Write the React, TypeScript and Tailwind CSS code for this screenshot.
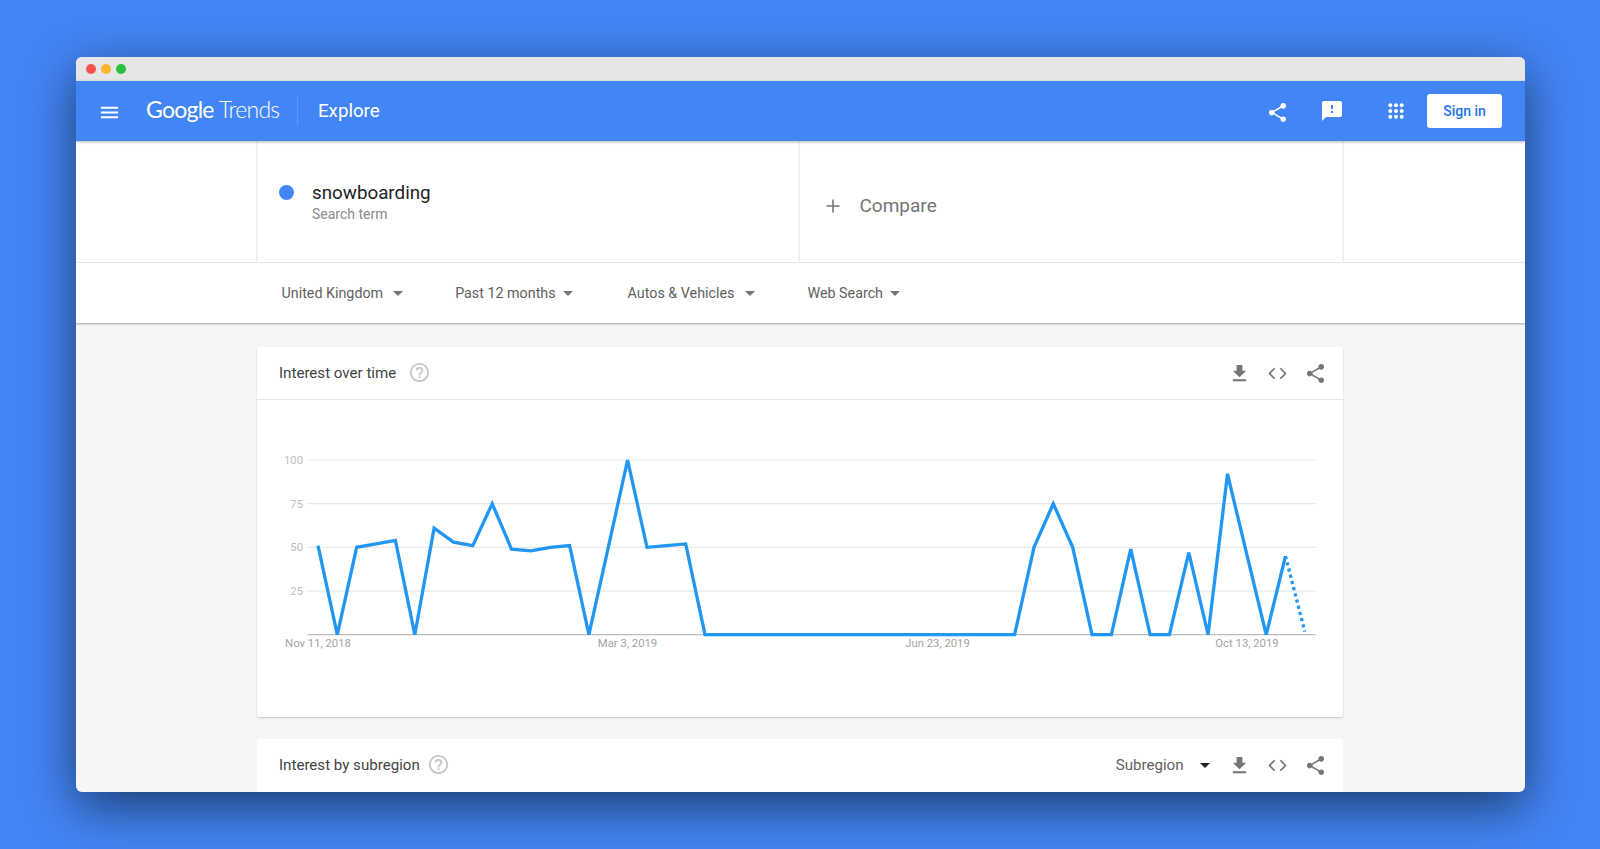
import { ReactNode } from "react";

const SHARE =
  "M18 16.08c-.76 0-1.44.3-1.96.77L8.91 12.7c.05-.23.09-.46.09-.7s-.04-.47-.09-.7l7.05-4.11c.54.5 1.25.81 2.04.81 1.66 0 3-1.34 3-3s-1.34-3-3-3-3 1.34-3 3c0 .24.04.47.09.7L8.04 9.81C7.5 9.31 6.79 9 6 9c-1.66 0-3 1.34-3 3s1.34 3 3 3c.79 0 1.5-.31 2.04-.81l7.12 4.16c-.05.21-.08.43-.08.65 0 1.61 1.31 2.92 2.92 2.92 1.61 0 2.92-1.31 2.92-2.92s-1.31-2.92-2.92-2.92z";
const HELP =
  "M11 18h2v-2h-2v2zm1-16C6.48 2 2 6.48 2 12s4.48 10 10 10 10-4.48 10-10S17.52 2 12 2zm0 18c-4.41 0-8-3.59-8-8s3.59-8 8-8 8 3.59 8 8-3.59 8-8 8zm0-14c-2.21 0-4 1.79-4 4h2c0-1.1.9-2 2-2s2 .9 2 2c0 2-3 1.75-3 5h2c0-2.25 3-2.5 3-5 0-2.21-1.79-4-4-4z";

const Icon = ({ d, className }: { d: string; className: string }) => (
  <svg viewBox="0 0 24 24" fill="currentColor" className={className}>
    <path d={d} />
  </svg>
);

const Caret = ({ className }: { className: string }) => (
  <svg viewBox="0 0 10 5" fill="currentColor" className={className}>
    <path d="M0 0h10L5 5z" />
  </svg>
);

const CardActions = () => (
  <div className="flex items-center text-[#757575]">
    <Icon d="M19 9h-4V3H9v6H5l7 7 7-7zM5 18v2h14v-2H5z" className="w-[23px] h-[23px]" />
    <svg viewBox="0 0 24 24" fill="none" stroke="currentColor" strokeWidth="1.8" className="w-[23px] h-[23px] ml-[15px]">
      <path d="M9 6.5 3.7 12 9 17.5M15 6.5l5.3 5.5-5.3 5.5" />
    </svg>
    <Icon d={SHARE} className="w-[23px] h-[23px] ml-[15px]" />
  </div>
);

const CardHeader = ({ title, help, children }: { title: string; help: string; children: ReactNode }) => (
  <div className="h-[52px] flex items-center pl-[22.5px] pr-[16px] shrink-0">
    <span className="text-[15.1px] text-[#444444]">{title}</span>
    <Icon d={HELP} className={`w-[23px] h-[23px] -mt-[1px] text-[#c8c8c8] ${help}`} />
    <div className="ml-auto flex items-center">{children}</div>
  </div>
);

// values read off the chart, one per week
const values = [
  51, 0, 50, 52, 54, 0, 61, 53, 51, 75, 49, 48, 50, 51, 0, 50, 100, 50, 51, 52, 0, 0, 0, 0, 0, 0, 0, 0, 0, 0, 0, 0, 0, 0,
  0, 0, 0, 50, 75, 50, 0, 0, 49, 0, 0, 47, 0, 92, 46, 0, 45,
];
const px = (i: number) => 61 + i * 19.35;
const py = (v: number) => 234.7 - v * 1.747;
const linePoints = values.map((v, i) => `${px(i).toFixed(1)},${py(v).toFixed(1)}`).join(" ");

const Chart = () => (
  <svg viewBox="0 0 1086 317" className="w-[1086px] h-[317px] font-[Roboto,sans-serif]">
    {[100, 75, 50, 25].map((v) => (
      <g key={v}>
        <line x1="50.5" x2="1058.5" y1={py(v)} y2={py(v)} stroke="#e8e8e8" strokeWidth="1.2" />
        <text x="46" y={py(v) + 4} textAnchor="end" fontSize="11.3" fill="#bdbdbd">
          {v}
        </text>
      </g>
    ))}
    <line x1="50.5" x2="1058.5" y1="234.7" y2="234.7" stroke="#bdbdbd" strokeWidth="1.2" />
    <polyline points={linePoints} fill="none" stroke="#2196f3" strokeWidth="3.3" strokeLinejoin="miter" />
    <line x1={px(50)} y1={py(45)} x2={px(51)} y2={py(0) - 3} stroke="#2196f3" strokeWidth="3.3" strokeDasharray="3.2 3.2" />
    <text x="61" y="247" textAnchor="middle" fontSize="11.3" fill="#a3a3a3">Nov 11, 2018</text>
    <text x="370.5" y="247" textAnchor="middle" fontSize="11.3" fill="#a3a3a3">Mar 3, 2019</text>
    <text x="680.5" y="247" textAnchor="middle" fontSize="11.3" fill="#a3a3a3">Jun 23, 2019</text>
    <text x="990" y="247" textAnchor="middle" fontSize="11.3" fill="#a3a3a3">Oct 13, 2019</text>
  </svg>
);

export default function App() {
  return (
    <div className="h-[849px] w-full overflow-hidden bg-[#4285f4] pt-[57px] pl-[75.5px] font-[Roboto,sans-serif]">
      <div className="w-[1449px] h-[735px] rounded-[6px] overflow-hidden bg-[#f6f6f6] flex flex-col shadow-[0_15px_50px_rgba(0,0,0,0.55)]">
        {/* window chrome */}
        <div className="h-[24px] shrink-0 bg-[#e6e6e6] flex items-center gap-[5.3px] pl-[10px]">
          <span className="w-[10px] h-[10px] rounded-full bg-[#f4524f]" />
          <span className="w-[10px] h-[10px] rounded-full bg-[#fbb42b]" />
          <span className="w-[10px] h-[10px] rounded-full bg-[#27c13f]" />
        </div>

        {/* top bar */}
        <header className="relative z-10 h-[60px] shrink-0 bg-[#4285f4] flex items-center text-white shadow-[0_1px_3px_rgba(0,0,0,0.3)]">
          <Icon d="M3 18h18v-2H3v2zm0-5h18v-2H3v2zm0-7v2h18V6H3z" className="w-[23px] h-[23px] ml-[22.5px] mt-[2px]" />
          <div className="ml-[25px] w-[133px] flex items-baseline whitespace-nowrap text-[23px] tracking-[-0.75px] mb-[4px]">
            <span className="font-[Lato,sans-serif]">Google</span>
            <span className="ml-[5px] font-light font-[Lato,sans-serif]">Trends</span>
          </div>
          <div className="ml-[18px] h-[30px] w-px bg-white/15" />
          <span className="ml-[20px] mt-[1px] text-[18.7px]">Explore</span>
          <div className="ml-auto flex items-center">
            <Icon d={SHARE} className="w-[23px] h-[23px] mt-[2px]" />
            <Icon
              d="M20 2H4c-1.1 0-1.99.9-1.99 2L2 22l4-4h14c1.1 0 2-.9 2-2V4c0-1.1-.9-2-2-2zm-7 12h-2v-2h2v2zm0-4h-2V6h2v4z"
              className="w-[24px] h-[24px] ml-[31px]"
            />
            <svg viewBox="0 0 16 16" fill="currentColor" className="w-[16px] h-[16px] ml-[44px]">
              {[2.3, 8, 13.7].map((cy) =>
                [2.3, 8, 13.7].map((cx) => <circle key={`${cx}-${cy}`} cx={cx} cy={cy} r="2" />),
              )}
            </svg>
            <button className="ml-[23px] mr-[22.5px] w-[75px] h-[34px] rounded-[3px] bg-white text-[#1a73e8] text-[14px] font-medium">
              Sign in
            </button>
          </div>
        </header>

        {/* search terms */}
        <div className="h-[122px] shrink-0 bg-white border-b border-[#ebebeb] flex pl-[180.5px] pr-[181px]">
          <div className="w-[542px] border-l-2 border-[#f1f1f1] flex items-start pl-[20.5px] pt-[44px]">
            <span className="w-[15px] h-[15px] rounded-full bg-[#4285f4]" />
            <div className="ml-[18.5px] -mt-[3px]">
              <div className="text-[18.8px] leading-[22px] text-[#222222]">snowboarding</div>
              <div className="text-[14px] leading-[20px] text-[#8a8a8a]">Search term</div>
            </div>
          </div>
          <div className="flex-1 border-l-2 border-r-2 border-[#f1f1f1] flex items-center pl-[25px] pt-[9px] text-[#757575]">
            <svg viewBox="0 0 16 16" fill="none" stroke="currentColor" strokeWidth="1.6" className="w-[16px] h-[16px]">
              <path d="M8 1.5v13M1.5 8h13" />
            </svg>
            <span className="ml-[18.5px] text-[19px]">Compare</span>
          </div>
        </div>

        {/* filters */}
        <div className="h-[60px] pt-[1px] shrink-0 bg-white flex items-center pl-[206px] text-[14.3px] text-[#5f5f5f] shadow-[0_1px_2px_rgba(0,0,0,0.35)] relative z-[1]">
          <span>United Kingdom</span>
          <Caret className="w-[10px] h-[5px] ml-[10px] text-[#757575]" />
          <span className="ml-[52px]">Past 12 months</span>
          <Caret className="w-[10px] h-[5px] ml-[7px] text-[#757575]" />
          <span className="ml-[55px]">Autos &amp; Vehicles</span>
          <Caret className="w-[10px] h-[5px] ml-[11px] text-[#757575]" />
          <span className="ml-[52px]">Web Search</span>
          <Caret className="w-[10px] h-[5px] ml-[7px] text-[#757575]" />
        </div>

        {/* cards */}
        <div className="flex-1 min-h-0 overflow-hidden pt-[24px] pl-[181px] pr-[182px] flex flex-col gap-[22px]">
          <section className="h-[370px] shrink-0 bg-white rounded-[2px] shadow-[0_1px_2px_rgba(0,0,0,0.2)]">
            <div className="border-b border-[#e6e6e6]">
              <CardHeader title="Interest over time" help="ml-[12px]">
                <CardActions />
              </CardHeader>
            </div>
            <Chart />
          </section>
          <section className="h-[120px] shrink-0 bg-white rounded-[2px]">
            <CardHeader title="Interest by subregion" help="ml-[7.5px]">
              <span className="text-[15.1px] text-[#5f5f5f]">Subregion</span>
              <Caret className="w-[10px] h-[5px] ml-[16px] mr-[18px] text-[#222222]" />
              <CardActions />
            </CardHeader>
          </section>
        </div>
      </div>
    </div>
  );
}
